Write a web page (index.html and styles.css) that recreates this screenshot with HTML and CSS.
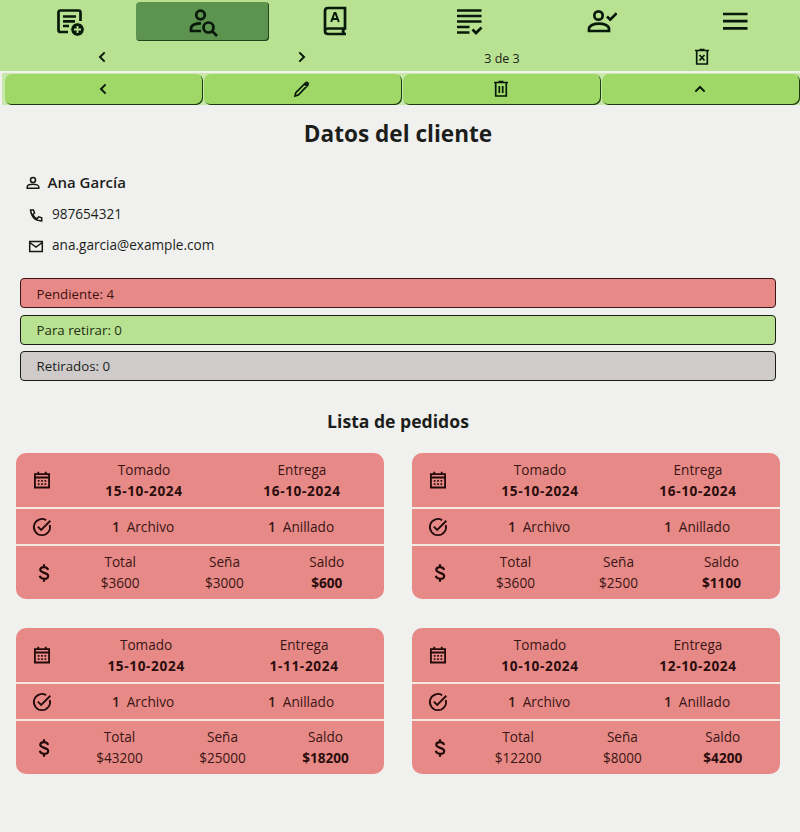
FILE: index.html
```
<!DOCTYPE html>
<html lang="es">
<head>
<meta charset="utf-8">
<title>Datos del cliente</title>
<link rel="stylesheet" href="styles.css">
</head>
<body>
<svg class="defs" width="0" height="0">
  <symbol id="left" viewBox="0 0 24 24"><path d="M16 5l-7 7 7 7"/></symbol>
  <symbol id="calendar" viewBox="0 0 24 24"><path d="M3.500 5h17v16h-17zM3.500 9h17M7.500 2v3M16.500 2v3"/><path d="M7 13h2m2 0h2m2 0h2M7 17h2m2 0h2m2 0h2"/></symbol>
  <symbol id="check" viewBox="0 0 24 24"><path d="M21.300 9.500A9.700 9.700 0 1 1 17 3.800M7 11.500l4 4L22 4.500"/></symbol>
  <symbol id="dollar" viewBox="0 0 24 24"><path d="M17 8.300C16.300 6 14.500 4.900 12 4.900c-2.700 0-4.500 1.200-4.500 3.300 0 4.600 9.500 2.600 9.500 7.300 0 2.200-2 3.500-4.800 3.500-2.800 0-4.700-1.300-5.300-3.600M12 1.500v3.500M12 19v3.500"/></symbol>
</svg>
<header class="top">
  <nav class="tabs">
    <a class="tab"><svg class="ico" viewBox="0 0 30 30"><path d="M13 25H5.500Q3.500 25 3.500 23V5.500Q3.500 3.500 5.500 3.500h18q2 0 2 2V14M8 9.500h13M8 14.300h12M8 19h6"/><circle class="solid" cx="22.500" cy="22.500" r="6.800"/><path class="cut" d="M22.500 19v7M19 22.500h7"/></svg></a>
    <a class="tab active"><svg class="ico" viewBox="0 0 30 30"><circle cx="12.500" cy="8" r="4.300"/><path d="M13 24H3v-2.500C3 18 8 16.300 13 16.300"/><circle cx="20.500" cy="20.500" r="5"/><path d="M24 24l5 5"/></svg></a>
    <a class="tab"><svg class="ico book" viewBox="0 0 30 30"><path d="M26 28H8q-3 0-3-3V5q0-3 3-3h17v20.500H8q-3 0-3 2.700M24 22.500q-2 3 0 5.500"/><path class="letter" d="M11.200 16L14.500 7h1L18.800 16M12.500 13h5"/></svg></a>
    <a class="tab"><svg class="ico" viewBox="0 0 30 30"><path d="M3 3.500h24.500M3 9h24.500M3 14.500h24.500M3 20h12.500M3 25.500h12.500M18.500 22.500l3.500 3.500 5.500-5.500"/></svg></a>
    <a class="tab"><svg class="ico" viewBox="0 0 30 30"><circle cx="11.500" cy="8.500" r="4.200"/><path d="M2 24v-2.200C2 15 22 15 22 21.800V24zM20 9.500l3.200 3.200 6.500-6.500"/></svg></a>
    <a class="tab"><svg class="ico" viewBox="0 0 30 30"><path d="M3 7h24.500M3 14.100h24.500M3 21.300h24.500"/></svg></a>
  </nav>
  <div class="pager">
    <span><svg class="sm"><use href="#left"/></svg></span>
    <span><svg class="sm flip"><use href="#left"/></svg></span>
    <span class="count">3 de 3</span>
    <span><svg class="trash" viewBox="0 0 18 18"><path d="M3.700 3v13h10.600V3M2 2.500h14M6.500 1.700h5M6.500 7l5 5.500M11.500 7l-5 5.500"/></svg></span>
  </div>
</header>
<div class="actions">
  <button><svg class="sm"><use href="#left"/></svg></button>
  <button><svg class="trash" viewBox="0 0 18 18"><path d="M2 16l.8-3.400L12.600 2.800q1.300-1 2.200 0 1 1 0 2.300L5.300 15zM11.500 3.700l2.800 2.800"/><path class="tip" d="M12.500 4l2 1.500"/></svg></button>
  <button><svg class="trash" viewBox="0 0 18 18"><path d="M3.700 3v13h10.600V3M2 2.500h14M6.500 1.700h5M7.300 6v7M10.700 6v7"/></svg></button>
  <button><svg class="sm up"><use href="#left"/></svg></button>
</div>
<main>
  <h1>Datos del cliente</h1>
  <div class="contact">
    <div class="name"><svg viewBox="0 0 16 16"><circle cx="8" cy="5" r="2.500"/><path d="M2.200 13.300v-1.500c0-3.500 11.600-3.500 11.600 0v1.500z"/></svg>Ana García</div>
    <div class="line"><svg viewBox="0 0 16 16"><path d="M2.500 3h3l1 3-1.700 1.500q1.500 2.800 4.200 4.200l1.700-1.800 3 1v3Q4 14 2.500 3z"/></svg><span>987654321</span></div>
    <div class="line"><svg viewBox="0 0 16 16"><path d="M1.700 3.500h12.600v10H1.700zM1.700 4.500L8 9l6.300-4.500"/></svg><span>ana.garcia@example.com</span></div>
  </div>
  <div class="states">
    <div class="state red">Pendiente: 4</div>
    <div class="state green">Para retirar: 0</div>
    <div class="state gray">Retirados: 0</div>
  </div>
  <h2>Lista de pedidos</h2>
  <section class="orders">
    <article class="order">
      <div class="row dates"><svg><use href="#calendar"/></svg><div class="cols"><p>Tomado<b>15-10-2024</b></p><p>Entrega<b>16-10-2024</b></p></div></div>
      <div class="row items"><svg><use href="#check"/></svg><div class="cols"><p><i>1</i>Archivo</p><p><i>1</i>Anillado</p></div></div>
      <div class="row money"><svg><use href="#dollar"/></svg><div class="cols"><p>Total<span>$3600</span></p><p>Seña<span>$3000</span></p><p>Saldo<b>$600</b></p></div></div>
    </article>
    <article class="order">
      <div class="row dates"><svg><use href="#calendar"/></svg><div class="cols"><p>Tomado<b>15-10-2024</b></p><p>Entrega<b>16-10-2024</b></p></div></div>
      <div class="row items"><svg><use href="#check"/></svg><div class="cols"><p><i>1</i>Archivo</p><p><i>1</i>Anillado</p></div></div>
      <div class="row money"><svg><use href="#dollar"/></svg><div class="cols"><p>Total<span>$3600</span></p><p>Seña<span>$2500</span></p><p>Saldo<b>$1100</b></p></div></div>
    </article>
    <article class="order">
      <div class="row dates"><svg><use href="#calendar"/></svg><div class="cols"><p>Tomado<b>15-10-2024</b></p><p>Entrega<b>1-11-2024</b></p></div></div>
      <div class="row items"><svg><use href="#check"/></svg><div class="cols"><p><i>1</i>Archivo</p><p><i>1</i>Anillado</p></div></div>
      <div class="row money"><svg><use href="#dollar"/></svg><div class="cols"><p>Total<span>$43200</span></p><p>Seña<span>$25000</span></p><p>Saldo<b>$18200</b></p></div></div>
    </article>
    <article class="order">
      <div class="row dates"><svg><use href="#calendar"/></svg><div class="cols"><p>Tomado<b>10-10-2024</b></p><p>Entrega<b>12-10-2024</b></p></div></div>
      <div class="row items"><svg><use href="#check"/></svg><div class="cols"><p><i>1</i>Archivo</p><p><i>1</i>Anillado</p></div></div>
      <div class="row money"><svg><use href="#dollar"/></svg><div class="cols"><p>Total<span>$12200</span></p><p>Seña<span>$8000</span></p><p>Saldo<b>$4200</b></p></div></div>
    </article>
  </section>
</main>
</body>
</html>
```
FILE: styles.css
```
* { box-sizing: border-box; margin: 0; padding: 0; }
body { background: #f0f1ee; color: #1c1e1b; font: 13.6px/21px "Open Sans", "Noto Sans", sans-serif; height: 832px; overflow: hidden; }
svg { fill: none; stroke: #07190a; stroke-width: 2.2; flex: none; display: block; }
.defs { position: absolute; }
.top { height: 71px; background: #b9e192; }
.tabs { display: grid; grid-template-columns: repeat(6, 133px); height: 43px; padding: 2px 0 2px 3px; }
.tab { display: flex; align-items: center; justify-content: center; border-radius: 4px; }
.tab.active { background: #5c934e; box-shadow: inset -1px -1px 0 #21451c; }
.ico { width: 30px; height: 30px; stroke-width: 2.7; }
.ico .solid { fill: #07190a; stroke: #b9e192; stroke-width: 1; }
.ico .cut { stroke: #b9e192; stroke-width: 1.8; }
.ico .letter { stroke-width: 2; }
.book { margin: -2px 2px 0 0; }
.pager { display: grid; grid-template-columns: repeat(4, 200px); height: 28px; padding-left: 2px; }
.pager span { display: flex; align-items: center; justify-content: center; }
.pager .count { font-size: 12.5px; padding-top: 3px; }
.sm { width: 16px; height: 16px; stroke-width: 3; }
.flip { transform: scaleX(-1); }
.up { transform: rotate(90deg); }
.trash { width: 18px; height: 18px; stroke-width: 1.7; }
.trash .tip { stroke-width: 2.5; }
.actions { display: grid; grid-template-columns: repeat(4, 198px); gap: 1px; height: 32px; margin: 2px 0 0 2px; padding: 1px 0 0 3px; background: #c9e8ab; }
.actions button { display: flex; align-items: center; justify-content: center; border: 0; border-radius: 7px; background: #a0d868; box-shadow: inset -1px -1px 0 #1c3a12; height: 31px; padding: 0 2px 2px 0; }
h1 { text-align: center; font-size: 22.6px; line-height: 32px; margin: 13px 4px 0 0; font-weight: 700; }
.contact { margin: 22px 0 0 25px; height: 106px; }
.contact svg { width: 16px; height: 16px; stroke-width: 1.5; stroke: #161816; }
.name { display: flex; gap: 6.5px; align-items: center; height: 21px; font-size: 15px; font-weight: 600; }
.line { display: flex; gap: 8px; align-items: center; height: 21px; margin: 10px 0 0 3px; }
.line svg { margin-top: 3px; }
.states { margin: 0 24px 0 20px; display: flex; flex-direction: column; gap: 6.5px; }
.state { height: 30px; border: 1px solid #1b1d18; border-radius: 4px; padding: 5px 0 0 15.5px; line-height: 20px; font-size: 13.3px; }
.red { background: #e78a87; color: #43100f; border-color: #3b1515; }
.green { background: #b9e192; color: #1d3011; }
.gray { background: #cecbca; }
.green, .gray { padding-top: 4px; }
h2 { text-align: center; font-size: 17.6px; line-height: 26px; margin: 27px 4px 0 0; font-weight: 700; }
.orders { display: grid; grid-template-columns: 368px 368px; gap: 29px 28px; margin: 19px 0 0 16px; }
.order { display: grid; grid-template-rows: 54px 35px 53px; gap: 2px; border-radius: 10px; overflow: hidden; background: #f8e8e4; color: #3a1515; height: 146px; }
.row { background: #e78a87; display: flex; align-items: center; padding-left: 16px; }
.row svg { width: 20px; height: 20px; stroke: #240b0b; }
.cols { display: flex; justify-content: space-around; width: 316px; margin-left: 13px; }
.cols p { text-align: center; }
.cols b, .cols p span { display: block; font-weight: 700; color: #2b0d0d; }
.cols p span { font-weight: 400; color: inherit; }
.cols i { font-style: normal; font-weight: 600; margin-right: 7px; }
.dates p { line-height: 21.5px; }
.dates b { letter-spacing: 0.65px; }
.items .cols { padding-bottom: 1px; }
.money svg { margin-left: 2px; stroke-width: 2.6; }
.money .cols { width: 309px; margin-left: 14px; padding-bottom: 2px; }
```
